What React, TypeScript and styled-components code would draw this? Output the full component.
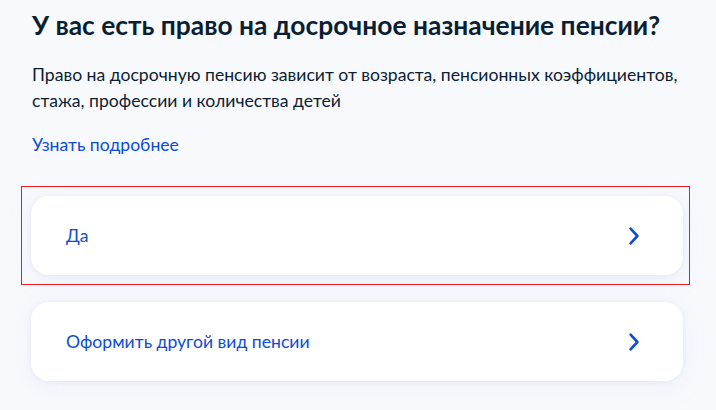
import React from "react";
import styled, { createGlobalStyle } from "styled-components";

const Global = createGlobalStyle`
  html, body { margin: 0; padding: 0; }
  body {
    background: #f8f9fd;
    font-family: Lato, "Noto Sans", sans-serif;
    color: #0b1f33;
  }
`;

const Page = styled.main`
  padding: 8px 33px 0 31px;
  box-sizing: border-box;
  width: 716px;
  height: 410px;
  overflow: hidden;
`;

const Title = styled.h1`
  margin: 0 0 0 1px;
  font-size: 26.4px;
  line-height: 35px;
  font-weight: 700;
  color: #0b1f33;
`;

const Lead = styled.p`
  margin: 19px 0 0 1px;
  font-size: 17.6px;
  line-height: 26px;
  font-weight: 400;
`;

const MoreLink = styled.a`
  display: block;
  width: fit-content;
  margin: 18px 0 0 1px;
  font-size: 17.6px;
  line-height: 26px;
  color: #0d4cd3;
  text-decoration: none;
  cursor: pointer;
`;

const Options = styled.div`
  display: flex;
  flex-direction: column;
  gap: 27px;
  margin-top: 38px;
`;

const Card = styled.button<{ $highlighted?: boolean }>`
  position: relative;
  display: flex;
  align-items: center;
  justify-content: space-between;
  height: 79px;
  padding: 0 44px 0 35px;
  border: none;
  border-radius: 18px;
  background: #ffffff;
  box-shadow: 0 1px 4px rgba(224, 230, 244, 0.7), 0 4px 18px rgba(226, 232, 246, 0.55);
  font-family: inherit;
  font-size: 17.6px;
  line-height: 26px;
  color: #0d4cd3;
  text-align: left;
  cursor: pointer;

  &::after {
    content: "";
    display: ${(p) => (p.$highlighted ? "block" : "none")};
    position: absolute;
    top: -10px;
    bottom: -10px;
    left: -10px;
    right: -7px;
    border: 1px solid rgb(237, 28, 36);
    pointer-events: none;
  }
`;

const Chevron = () => (
  <svg width="10" height="18" viewBox="0 0 10 18" fill="none">
    <path d="M1.6 1.6L8.4 9L1.6 16.4" stroke="#0d4cd3" strokeWidth="2.6" strokeLinecap="round" strokeLinejoin="round" />
  </svg>
);

export default function App() {
  return (
    <>
      <Global />
      <Page>
        <Title>У вас есть право на досрочное назначение пенсии?</Title>
        <Lead>
          Право на досрочную пенсию зависит от возраста, пенсионных коэффициентов, стажа, профессии и количества детей
        </Lead>
        <MoreLink>Узнать подробнее</MoreLink>
        <Options>
          <Card $highlighted>
            <span>Да</span>
            <Chevron />
          </Card>
          <Card>
            <span>Оформить другой вид пенсии</span>
            <Chevron />
          </Card>
        </Options>
      </Page>
    </>
  );
}
